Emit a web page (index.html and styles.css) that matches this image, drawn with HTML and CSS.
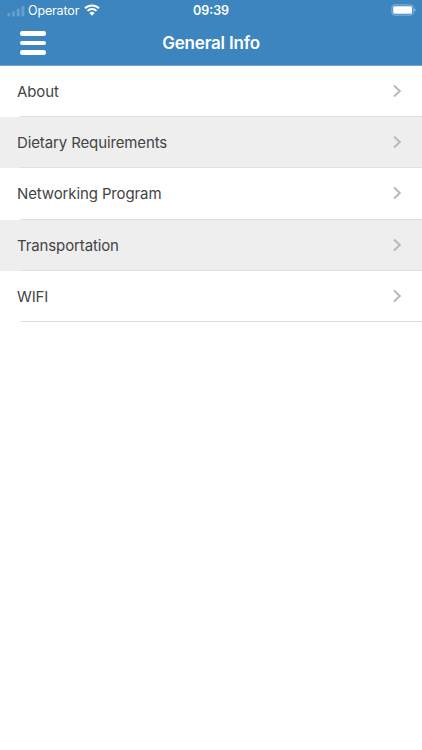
FILE: index.html
```
<!DOCTYPE html>
<html lang="en">

<head>
  <meta charset="utf-8" />
  <meta name="viewport" content="width=device-width, initial-scale=1" />
  <title>General Info</title>
  <link rel="stylesheet" href="styles.css">
</head>

<body>
  <header class="header">
    <div class="status-bar">
      <div class="status-left">
        <svg class="signal" width="18" height="12" viewBox="0 0 18 12">
          <rect x="0.3" y="8" width="3" height="3.5" rx="0.7" />
          <rect x="5" y="6.3" width="3" height="5.2" rx="0.7" />
          <rect x="9.7" y="3.8" width="3" height="7.7" rx="0.7" />
          <rect x="14.4" y="1" width="3" height="10.5" rx="0.7" />
        </svg>
        <span class="operator">Operator</span>
        <svg class="wifi" width="16" height="12" viewBox="0 0 16 12">
          <path d="M1 4.3a10 10 0 0 1 14 0M3.5 6.9a6.4 6.4 0 0 1 9 0" />
          <path class="wifi-dot" d="M5.4 9a3.8 3.8 0 0 1 5.2 0L8 11.7z" />
        </svg>
      </div>
      <span class="time">09:39</span>
      <div class="status-right">
        <svg width="26" height="12" viewBox="0 0 26 12">
          <rect class="battery-case" x="0.9" y="0.9" width="21.4" height="10.2" rx="2.8" />
          <rect class="battery-level" x="2.2" y="2.2" width="18.8" height="7.6" rx="1.4" />
          <path class="battery-tip" d="M23.4 4.2c1.6.6 1.6 3 0 3.6z" />
        </svg>
      </div>
    </div>
    <div class="nav-bar">
      <button class="menu-button" aria-label="Menu">
        <span class="menu-line"></span>
        <span class="menu-line"></span>
        <span class="menu-line"></span>
      </button>
      <h1 class="title">General Info</h1>
    </div>
  </header>
  <ul class="list">
    <li class="item">
      <span>About</span>
      <svg class="arrow" width="10" height="14" viewBox="0 0 10 14"><path d="M2 1.5l5.8 5.5L2 12.5" /></svg>
    </li>
    <li class="item">
      <span>Dietary Requirements</span>
      <svg class="arrow" width="10" height="14" viewBox="0 0 10 14"><path d="M2 1.5l5.8 5.5L2 12.5" /></svg>
    </li>
    <li class="item">
      <span>Networking Program</span>
      <svg class="arrow" width="10" height="14" viewBox="0 0 10 14"><path d="M2 1.5l5.8 5.5L2 12.5" /></svg>
    </li>
    <li class="item">
      <span>Transportation</span>
      <svg class="arrow" width="10" height="14" viewBox="0 0 10 14"><path d="M2 1.5l5.8 5.5L2 12.5" /></svg>
    </li>
    <li class="item">
      <span>WIFI</span>
      <svg class="arrow" width="10" height="14" viewBox="0 0 10 14"><path d="M2 1.5l5.8 5.5L2 12.5" /></svg>
    </li>
  </ul>
</body>

</html>
```
FILE: styles.css
```
html,
body {
  margin: 0;
  padding: 0;
  height: 100%;
  background-color: #fff;
  font-family: Inter, "Liberation Sans", sans-serif;
}

.header {
  height: 65px;
  background-color: #3c85be;
  border-bottom: 1px solid #76a8d0;
  color: #fff;
}

.status-bar {
  display: grid;
  grid-template-columns: 1fr auto 1fr;
  align-items: center;
  height: 21px;
  padding: 0 5px 0 7px;
}

.status-left {
  display: flex;
  align-items: center;
}

.signal {
  fill: #659fce;
}

.operator {
  margin: 0 5px 0 3px;
  font-size: 12.5px;
  line-height: 20px;
  letter-spacing: -0.15px;
}

.wifi {
  margin-bottom: 1px;
  fill: none;
  stroke: #fff;
  stroke-width: 2;
}

.wifi-dot {
  fill: #fff;
  stroke: none;
}

.time {
  margin: 1px 0 0 -2px;
  font-size: 12.5px;
  font-weight: 600;
  line-height: 20px;
}

.status-right {
  display: flex;
  justify-content: flex-end;
  margin-bottom: 1px;
}

.battery-case {
  fill: none;
  stroke: #8bb9dd;
  stroke-width: 1;
}

.battery-level {
  fill: #fff;
}

.battery-tip {
  fill: #9cc3e2;
}

.nav-bar {
  display: grid;
  grid-template-columns: 60px 1fr 60px;
  align-items: center;
  height: 44px;
}

.menu-button {
  display: flex;
  flex-direction: column;
  gap: 5px;
  width: 26px;
  margin: 0 0 0 20px;
  padding: 0;
  border: 0;
  background: none;
}

.menu-line {
  height: 4.5px;
  border-radius: 2.25px;
  background-color: #fff;
}

.title {
  margin: 0;
  text-align: center;
  font-size: 17px;
  font-weight: 600;
  line-height: 22px;
  letter-spacing: -0.2px;
}

.list {
  margin: 0;
  padding: 0;
  list-style: none;
}

.item {
  display: flex;
  align-items: center;
  justify-content: space-between;
  box-sizing: border-box;
  height: 51.2px;
  padding: 0 20px 0 17px;
  color: #444;
  font-size: 15px;
  letter-spacing: -0.12px;
  background-image: linear-gradient(#e0e0e0, #e0e0e0);
  background-repeat: no-repeat;
  background-position: 20px 100%;
  background-size: 100% 1px;
}

.item:nth-child(even) {
  background-color: #eee;
}

.arrow {
  margin-bottom: 1px;
  fill: none;
  stroke: #b9b9b9;
  stroke-width: 2;
}
```
